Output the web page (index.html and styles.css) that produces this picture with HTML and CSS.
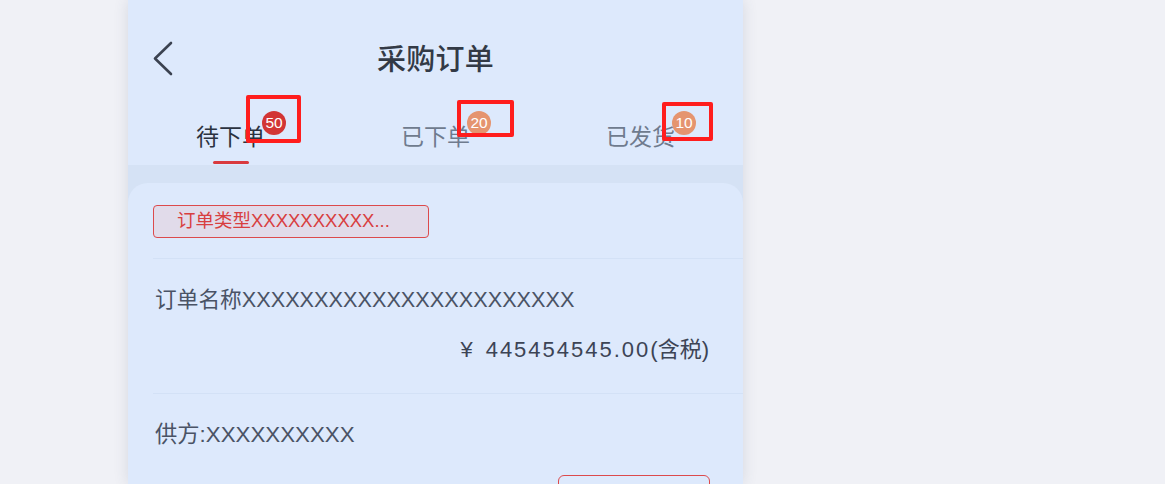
FILE: index.html
```html
<!DOCTYPE html>
<html lang="zh-CN">
<head>
<meta charset="utf-8">
<title>采购订单</title>
<link rel="stylesheet" href="styles.css">
</head>
<body>
<div class="page">
  <div class="phone">
    <header class="navbar">
      <div class="nav-side">
        <svg class="back" width="24" height="36" viewBox="0 0 24 36" aria-hidden="true">
          <path d="M20 3 L4 18.5 L20 34" fill="none" stroke="#3b4250" stroke-width="2.6" stroke-linecap="round" stroke-linejoin="round"/>
        </svg>
      </div>
      <h1 class="title">采购订单</h1>
      <div class="nav-side"></div>
    </header>

    <nav class="tabs">
      <div class="tab active">
        <span class="label">待下单<span class="badge badge-red">50</span><span class="mark mark-1"></span></span>
        <span class="underline"></span>
      </div>
      <div class="tab">
        <span class="label">已下单<span class="badge badge-orange">20</span><span class="mark mark-2"></span></span>
        <span class="underline"></span>
      </div>
      <div class="tab">
        <span class="label">已发货<span class="badge badge-orange">10</span><span class="mark mark-3"></span></span>
        <span class="underline"></span>
      </div>
    </nav>

    <main class="content">
      <section class="card">
        <div class="row tag-row">
          <span class="tag">订单类型XXXXXXXXXX...</span>
        </div>
        <div class="row info-row">
          <div class="name">订单名称XXXXXXXXXXXXXXXXXXXXXXX</div>
          <div class="price"><span class="yen">&#165;</span><span class="num">445454545.00</span>(含税)</div>
        </div>
        <div class="row supplier-row">
          <div class="supplier">供方:XXXXXXXXXX</div>
          <div class="actions"><span class="btn"></span></div>
        </div>
      </section>
    </main>
  </div>
</div>
</body>
</html>
```

FILE: styles.css
```css
* { box-sizing: border-box; }

html, body {
  margin: 0;
  padding: 0;
  height: 484px;
  overflow: hidden;
  background: #f0f1f6;
  font-family: "Liberation Sans", "Noto Sans CJK SC", sans-serif;
}

.page {
  display: flex;
  padding-left: 128px;
  height: 484px;
}

.phone {
  width: 615px;
  height: 484px;
  background: #dde9fc;
  box-shadow: 0 0 14px rgba(60, 70, 100, 0.14);
  display: flex;
  flex-direction: column;
  overflow: hidden;
}

/* nav bar */
.navbar {
  flex-shrink: 0;
  height: 114px;
  display: grid;
  grid-template-columns: 1fr auto 1fr;
  align-items: center;
}

.nav-side {
  display: flex;
  align-items: center;
  padding-left: 23px;
}

.back { display: block; margin-top: 2px; }

.title {
  margin: 0;
  font-family: "Noto Sans CJK SC", sans-serif;
  font-size: 29px;
  font-weight: 500;
  color: #333a46;
  line-height: 40px;
  letter-spacing: 0.3px;
}

/* tabs */
.tabs {
  flex-shrink: 0;
  height: 51px;
  display: grid;
  grid-template-columns: repeat(3, 1fr);
}

.tab {
  display: flex;
  flex-direction: column;
  align-items: center;
  padding-top: 6px;
}

.label {
  position: relative;
  font-family: "Noto Sans CJK SC", sans-serif;
  font-size: 23px;
  line-height: 30px;
  height: 30px;
  color: #6f7b8e;
}

.tab.active .label { color: #2b3240; }

.underline {
  margin-top: 11px;
  width: 36px;
  height: 3px;
  border-radius: 2px;
  background: transparent;
}

.tab.active .underline { background: #d93a3e; }

.badge {
  position: absolute;
  left: calc(100% - 3px);
  top: -9px;
  width: 24px;
  height: 24px;
  border-radius: 50%;
  color: #fff;
  font-family: "Liberation Sans", sans-serif;
  font-size: 15.5px;
  line-height: 24px;
  text-align: center;
}

.badge-red { background: #d23535; }
.badge-orange { background: #e5946f; }

/* red annotation boxes (overlay) */
.mark {
  position: absolute;
  border: 4px solid #ff1d1d;
  border-radius: 2px;
}
.mark-1 { left: 50px; top: -25px; width: 55px; height: 48px; }
.mark-2 { left: 56px; top: -20px; width: 57px; height: 37px; }
.mark-3 { left: 56px; top: -18px; width: 51px; height: 39px; }

/* content */
.content {
  flex: 1 0 auto;
  background: #d5e2f5;
  padding-top: 18px;
}

.card {
  background: #dde9fc;
  border-radius: 20px 20px 0 0;
  display: flex;
  flex-direction: column;
}

.row {
  margin-left: 25px;
  border-bottom: 1px solid #d3e1f6;
}

.tag-row {
  padding: 22px 0 20px;
  display: flex;
}

.tag {
  width: 276px;
  height: 33px;
  border: 1.5px solid #dc4a4c;
  border-radius: 4px;
  background: #e1dbea;
  color: #d83e40;
  font-size: 18.5px;
  line-height: 30px;
  padding-left: 23px;
  white-space: nowrap;
  overflow: hidden;
}

.info-row {
  padding: 26px 34px 28px 2px;
  display: flex;
  flex-direction: column;
  gap: 20px;
}

.name, .supplier {
  font-size: 21.7px;
  line-height: 30px;
  color: #4a5365;
  white-space: nowrap;
}

.supplier { font-size: 22.3px; }

.price {
  align-self: flex-end;
  font-size: 22px;
  line-height: 30px;
  color: #3c4455;
  white-space: nowrap;
}

.price .yen { margin-right: 13px; }
.price .num { letter-spacing: 2px; }

.supplier-row {
  border-bottom: none;
  padding: 26px 33px 0 2px;
  display: flex;
  flex-direction: column;
  gap: 25px;
}

.actions {
  display: flex;
  justify-content: flex-end;
}

.btn {
  width: 152px;
  height: 44px;
  border: 1.5px solid #dc4a4c;
  border-radius: 6px;
}
```
